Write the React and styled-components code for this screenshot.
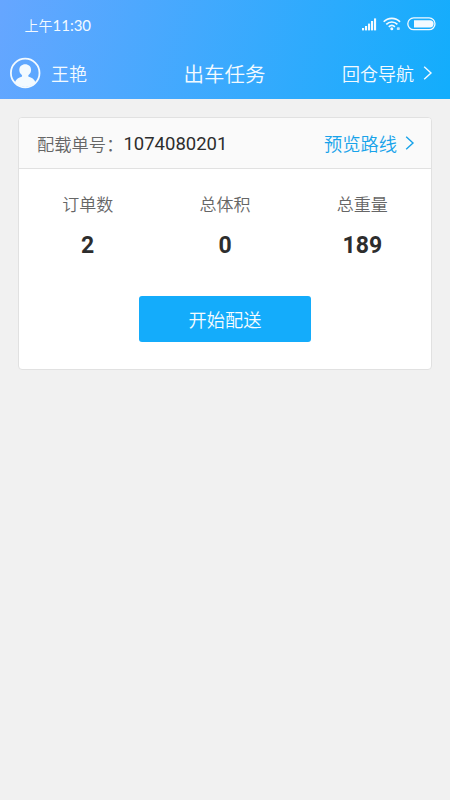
import React from 'react';
import styled, { createGlobalStyle } from 'styled-components';

const stats = [
	{ label: '订单数', value: '2' },
	{ label: '总体积', value: '0' },
	{ label: '总重量', value: '189' },
];

const Chevron = () => (
	<svg width='10' height='16' viewBox='0 0 10 16' fill='none'>
		<path d='M1.2 1.8 L8 8 L1.2 14.2' stroke='currentColor' strokeWidth='1.4' />
	</svg>
);

const SignalIcon = () => (
	<svg width='15' height='13' viewBox='0 0 15 13' fill='currentColor'>
		<rect x='0' y='10' width='2.1' height='2.4' />
		<rect x='3' y='8' width='2.1' height='4.4' />
		<rect x='6' y='5.6' width='2.1' height='6.8' />
		<rect x='9' y='3' width='2.1' height='9.4' />
		<rect x='12' y='0.4' width='2.1' height='12' />
	</svg>
);

const WifiIcon = () => (
	<svg width='18' height='14' viewBox='0 0 18 14' fill='none'>
		<g stroke='currentColor' strokeWidth='1.7'>
			<path d='M0.7 4.8 C5 0.1 12.6 0.1 17 4.8' />
			<path d='M3.3 7.4 C6.4 4.2 11.2 4.2 14.4 7.4' />
			<path d='M5.8 9.9 C7.6 8.2 10.1 8.2 11.9 9.9' />
		</g>
		<circle cx='8.8' cy='11.8' r='1.5' fill='currentColor' />
		<rect x='13.8' y='10.2' width='3' height='2.8' rx='0.8' fill='currentColor' opacity='0.75' />
	</svg>
);

const BatteryIcon = () => (
	<svg width='29' height='14' viewBox='0 0 29 14' fill='none'>
		<rect x='0.8' y='0.9' width='27.2' height='11.8' rx='5.9' stroke='currentColor' strokeWidth='1.3' />
		<path
			d='M7 3.2 H23 A3.6 3.6 0 0 1 23 10.4 H7 Z'
			fill='currentColor'
		/>
	</svg>
);

const Avatar = () => (
	<svg width='32' height='32' viewBox='0 0 32 32' fill='none'>
		<path
			d='M4.8 25.6 C6 22 9 20.6 11.6 19.8 C12.3 19.5 12.3 18.6 11.6 17.8 C10.1 16.6 9.3 15 9.3 12.8 C9.3 9.4 11.9 7.2 15.2 7.2 C18.5 7.2 21.1 9.4 21.1 12.8 C21.1 15 20.3 16.6 18.8 17.8 C18.1 18.6 18.1 19.5 18.8 19.8 C21.4 20.6 24.4 22 25.6 25.6 C20.5 31.4 10 31.4 4.8 25.6 Z'
			fill='currentColor'
		/>
		<circle cx='15.2' cy='16' r='14.3' stroke='currentColor' strokeWidth='1.8' />
	</svg>
);

const App = () => {
	return (
		<>
			<GlobalStyle />
			<Page>
				<Header>
					<StatusBar>
						<Time>
							上午<span>11:30</span>
						</Time>
						<StatusIcons>
							<SignalIcon />
							<WifiIcon />
							<BatteryIcon />
						</StatusIcons>
					</StatusBar>
					<NavBar>
						<User>
							<Avatar />
							<span>王艳</span>
						</User>
						<Title>出车任务</Title>
						<NavLink>
							回仓导航
							<Chevron />
						</NavLink>
					</NavBar>
				</Header>
				<Card>
					<CardHeader>
						<OrderLabel>配载单号：</OrderLabel>
						<OrderNumber>1074080201</OrderNumber>
						<RouteLink>
							预览路线
							<Chevron />
						</RouteLink>
					</CardHeader>
					<Stats>
						{stats.map(({ label, value }) => (
							<Stat key={label}>
								<StatLabel>{label}</StatLabel>
								<StatValue>{value}</StatValue>
							</Stat>
						))}
					</Stats>
					<StartButton>开始配送</StartButton>
				</Card>
			</Page>
		</>
	);
};

const GlobalStyle = createGlobalStyle`
	* {
		box-sizing: border-box;
	}
	body {
		margin: 0;
		background: #f1f1f1;
		font-family: Roboto, 'Noto Sans CJK SC', sans-serif;
	}
	svg {
		display: block;
		flex-shrink: 0;
	}
`;

const cjk = `
	font-family: 'Noto Sans CJK SC', sans-serif;
	font-weight: 350;
`;

const Page = styled.div`
	width: 450px;
	height: 800px;
	overflow: hidden;
	background: #f1f1f1;
`;

const Header = styled.header`
	height: 98.5px;
	color: #f3faff;
	background: linear-gradient(105deg, #66a6ff 0%, #12adfc 100%);
`;

const StatusBar = styled.div`
	display: flex;
	justify-content: space-between;
	align-items: center;
	height: 48px;
	padding: 0 14px 0 24.5px;
`;

const Time = styled.div`
	${cjk}
	font-size: 14px;
	line-height: 20px;
	padding-top: 1px;
	span {
		font-family: Lato, sans-serif;
		font-size: 15px;
		font-weight: 400;
	}
`;

const StatusIcons = styled.div`
	display: flex;
	align-items: center;
	gap: 6px;
`;

const NavBar = styled.nav`
	${cjk}
	display: grid;
	grid-template-columns: 1fr auto 1fr;
	align-items: center;
	height: 50px;
	padding: 0 17px 0 10px;
	font-size: 18px;
	line-height: 26px;
`;

const User = styled.div`
	display: flex;
	align-items: center;
	gap: 9px;
`;

const Title = styled.h1`
	margin: 0;
	padding: 0 0 1px 6px;
	font-size: 20.5px;
	font-weight: inherit;
	line-height: 30px;
`;

const NavLink = styled.a`
	display: flex;
	justify-content: flex-end;
	align-items: center;
	gap: 9px;
`;

const Card = styled.section`
	display: flex;
	flex-direction: column;
	width: 414px;
	height: 253px;
	margin: 18.5px auto 0;
	background: #fff;
	border: 1px solid #e1e1e1;
	border-radius: 4px;
	overflow: hidden;
`;

const CardHeader = styled.div`
	display: flex;
	align-items: center;
	height: 51px;
	padding: 0 16px 0 18px;
	background: #fafafa;
	border-bottom: 1px solid #e1e1e1;
`;

const OrderLabel = styled.span`
	${cjk}
	padding-top: 1px;
	font-size: 17.3px;
	line-height: 26px;
	color: #666;
`;

const OrderNumber = styled.span`
	padding-top: 1px;
	font-size: 18.5px;
	line-height: 26px;
	color: #2d2d2d;
`;

const RouteLink = styled.a`
	${cjk}
	display: flex;
	align-items: center;
	gap: 8px;
	margin-left: auto;
	font-size: 18.3px;
	line-height: 26px;
	color: #18a3ea;
`;

const Stats = styled.div`
	display: grid;
	grid-template-columns: repeat(3, 1fr);
	padding-top: 23px;
`;

const Stat = styled.div`
	display: flex;
	flex-direction: column;
	align-items: center;
`;

const StatLabel = styled.div`
	${cjk}
	font-size: 17px;
	line-height: 24px;
	color: #666;
`;

const StatValue = styled.div`
	margin-top: 16px;
	font-size: 23px;
	font-weight: 700;
	line-height: 28px;
	color: #2d2d2d;
`;

const StartButton = styled.button`
	${cjk}
	align-self: center;
	width: 172px;
	height: 46px;
	margin-top: 36px;
	padding: 0;
	border: none;
	border-radius: 3px;
	background: #14acfb;
	color: #f6fcff;
	font-size: 18.2px;
`;

export default App;
